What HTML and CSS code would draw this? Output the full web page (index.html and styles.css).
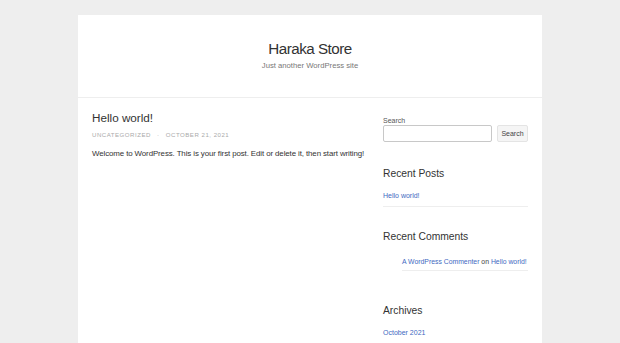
FILE: index.html
```html
<!DOCTYPE html>
<html lang="en">

<head>
    <meta charset="UTF-8" />
    <meta name="viewport" content="width=device-width, initial-scale=1.0" />
    <title>Haraka Store</title>
    <link rel="stylesheet" href="styles.css">
</head>

<body>

    <div class="site">
        <header class="site-header">
            <p class="site-title">Haraka Store</p>
            <p class="site-description">Just another WordPress site</p>
        </header>

        <div class="site-content">
            <main class="content-area">
                <article class="post">
                    <h2 class="entry-title">Hello world!</h2>
                    <div class="entry-meta">
                        <span>Uncategorized</span>
                        <span class="sep">&middot;</span>
                        <span>October 21, 2021</span>
                    </div>
                    <p class="entry-content">Welcome to WordPress. This is your first post. Edit or delete it, then start writing!</p>
                </article>
            </main>

            <aside class="sidebar">
                <section class="widget widget-search">
                    <label class="search-label" for="s">Search</label>
                    <div class="search-row">
                        <input class="search-input" type="text" id="s">
                        <button class="search-btn">Search</button>
                    </div>
                </section>

                <section class="widget widget-posts">
                    <h3 class="widget-title">Recent Posts</h3>
                    <ul class="widget-list">
                        <li><a href="#">Hello world!</a></li>
                    </ul>
                </section>

                <section class="widget widget-comments">
                    <h3 class="widget-title">Recent Comments</h3>
                    <ul class="widget-list indented">
                        <li><a href="#">A WordPress Commenter</a> on <a href="#">Hello world!</a></li>
                    </ul>
                </section>

                <section class="widget widget-archives">
                    <h3 class="widget-title">Archives</h3>
                    <ul class="widget-list">
                        <li><a href="#">October 2021</a></li>
                    </ul>
                </section>
            </aside>
        </div>
    </div>

</body>

</html>
```

FILE: styles.css
```css
* {
    box-sizing: border-box;
}

body {
    font-family: "Liberation Sans", Arial, sans-serif;
    margin: 0;
    background: #eeeeee;
    color: #333;
}

.site {
    width: 464px;
    margin: 15px auto 0;
    background: #fff;
    min-height: 340px;
}

.site-header {
    height: 83px;
    border-bottom: 1px solid #eee;
    text-align: center;
    padding-top: 25px;
}

.site-title {
    margin: 0;
    font-size: 15.2px;
    letter-spacing: -0.5px;
    line-height: 18px;
    color: #333;
}

.site-description {
    margin: 3px 0 0;
    font-size: 7.7px;
    line-height: 10px;
    color: #777;
}

.site-content {
    display: flex;
    padding: 0 14px;
    gap: 18px;
}

.content-area {
    flex: 1;
}

.entry-title {
    margin: 12px 0 0;
    font-size: 11.7px;
    font-weight: normal;
    line-height: 16px;
    color: #333;
}

.entry-meta {
    margin-top: 4px;
    font-size: 6.1px;
    letter-spacing: 0.5px;
    text-transform: uppercase;
    color: #aaa;
    line-height: 10px;
}

.entry-meta .sep {
    margin: 0 4px;
}

.entry-content {
    margin: 8px 0 0;
    font-size: 7.9px;
    letter-spacing: -0.1px;
    line-height: 12px;
    color: #333;
    white-space: nowrap;
}

.sidebar {
    width: 145px;
    padding-top: 18px;
}

.widget-posts {
    margin-top: 25px;
}

.widget-comments {
    margin-top: 23px;
}

.widget-archives {
    margin-top: 33px;
}

.search-label {
    display: block;
    font-size: 7px;
    line-height: 9px;
    color: #555;
}

.search-row {
    display: flex;
    gap: 5px;
}

.search-input {
    width: 109px;
    height: 17px;
    border: 1px solid #c8c8c8;
    border-radius: 2px;
    padding: 0;
    margin: 0;
}

.search-btn {
    flex: 1;
    height: 17px;
    padding: 0;
    margin: 0;
    border: 1px solid #e4e4e4;
    border-radius: 2px;
    background: #f5f5f5;
    font-family: "Liberation Sans", Arial, sans-serif;
    font-size: 7px;
    color: #444;
}

.widget-title {
    margin: 0;
    font-size: 10.3px;
    font-weight: normal;
    line-height: 14px;
    color: #333;
}

.widget-list {
    list-style: none;
    margin: 10px 0 0;
    padding: 0;
}

.widget-list.indented {
    padding-left: 19px;
    margin-top: 13px;
}

.widget-list li {
    font-size: 7px;
    line-height: 9px;
    padding-bottom: 6px;
    border-bottom: 1px solid #eee;
    color: #444;
}

.widget-list.indented li {
    font-size: 6.85px;
    padding-bottom: 4px;
    white-space: nowrap;
}

.widget-list a {
    color: #4169c1;
    text-decoration: none;
}
```
